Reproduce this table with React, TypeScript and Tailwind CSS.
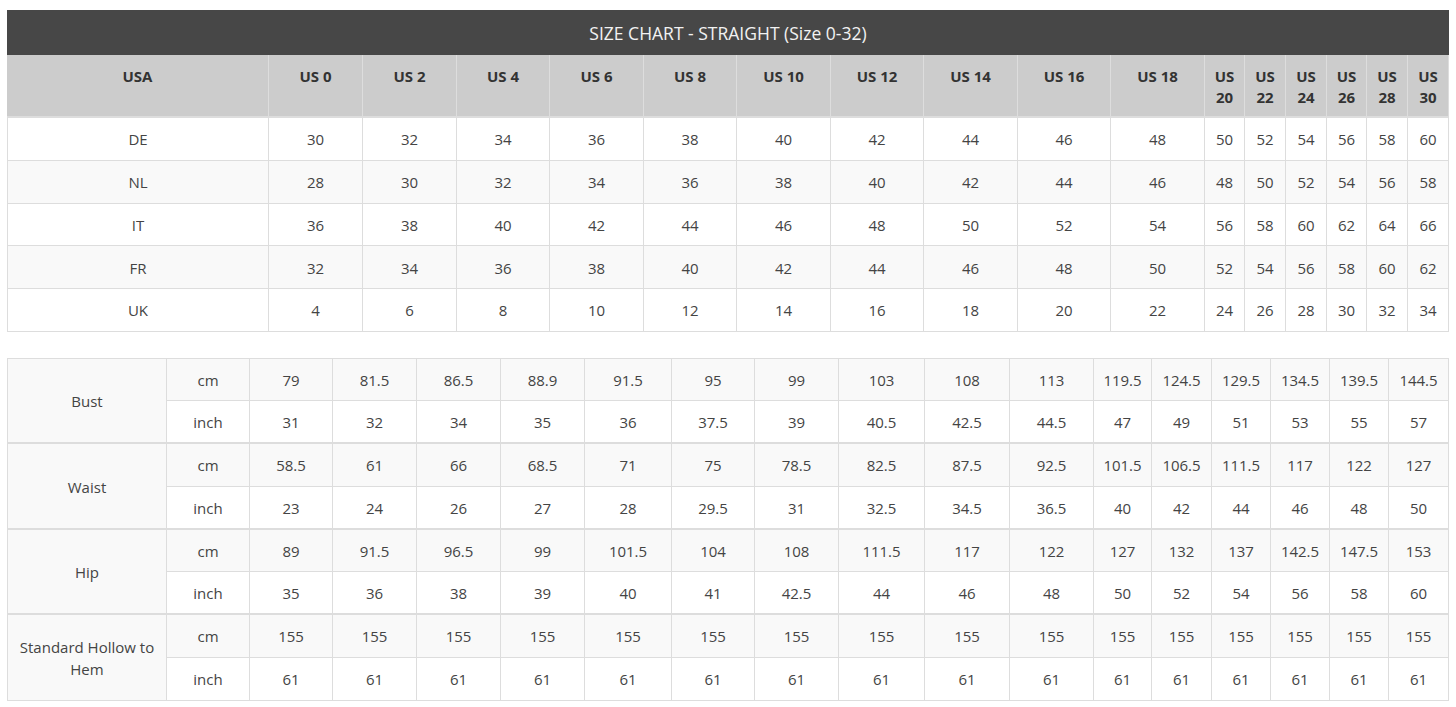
const sizes = [0, 2, 4, 6, 8, 10, 12, 14, 16, 18, 20, 22, 24, 26, 28, 30];

const range = (start: number) => sizes.map((_, i) => String(start + i * 2));

const countries = [
  { name: "DE", values: range(30) },
  { name: "NL", values: range(28) },
  { name: "IT", values: range(36) },
  { name: "FR", values: range(32) },
  { name: "UK", values: range(4) },
];

type Group = { label: string; cm: string[]; inch: string[] };

const groups: Group[] = [
  {
    label: "Bust",
    cm: ["79", "81.5", "86.5", "88.9", "91.5", "95", "99", "103", "108", "113", "119.5", "124.5", "129.5", "134.5", "139.5", "144.5"],
    inch: ["31", "32", "34", "35", "36", "37.5", "39", "40.5", "42.5", "44.5", "47", "49", "51", "53", "55", "57"],
  },
  {
    label: "Waist",
    cm: ["58.5", "61", "66", "68.5", "71", "75", "78.5", "82.5", "87.5", "92.5", "101.5", "106.5", "111.5", "117", "122", "127"],
    inch: ["23", "24", "26", "27", "28", "29.5", "31", "32.5", "34.5", "36.5", "40", "42", "44", "46", "48", "50"],
  },
  {
    label: "Hip",
    cm: ["89", "91.5", "96.5", "99", "101.5", "104", "108", "111.5", "117", "122", "127", "132", "137", "142.5", "147.5", "153"],
    inch: ["35", "36", "38", "39", "40", "41", "42.5", "44", "46", "48", "50", "52", "54", "56", "58", "60"],
  },
  {
    label: "Standard Hollow to Hem",
    cm: sizes.map(() => "155"),
    inch: sizes.map(() => "61"),
  },
];

const cell = "flex items-center justify-center text-center border-r border-[#ddd]";

export default function App() {
  return (
    <div className="min-h-screen bg-white px-[7px] pt-[10px] font-['Open_Sans',sans-serif] text-[15px] text-[#444]">
      {/* conversion table */}
      <div className="grid grid-cols-[262px_94px_94px_93px_94px_93px_94px_93px_94px_93px_94px_40px_41px_41px_40px_41px_41px]">
        <div className="col-span-17 flex h-[45px] items-center justify-center bg-[#474747] pt-px text-[17.5px] text-[#f2f2f2]">
          SIZE CHART - STRAIGHT (Size 0-32)
        </div>

        <div className="flex h-[63px] justify-center border-b-2 border-r border-[#ddd] bg-[#ccc] pt-[11px] font-bold leading-[21px] text-[#333]">
          USA
        </div>
        {sizes.map((s) => (
          <div
            key={s}
            className="flex h-[63px] justify-center border-b-2 border-r border-[#ddd] bg-[#ccc] px-[6px] pt-[11px] text-center font-bold leading-[21px] text-[#333]"
          >
            US {s}
          </div>
        ))}

        {countries.map((c, r) => {
          const bg = r % 2 === 1 ? "bg-[#f9f9f9]" : "bg-white";
          return [
            <div key={c.name} className={`${cell} ${bg} h-[42.8px] border-b border-l pt-px`}>
              {c.name}
            </div>,
            ...c.values.map((v, i) => (
              <div key={c.name + i} className={`${cell} ${bg} h-[42.8px] border-b pt-px`}>
                {v}
              </div>
            )),
          ];
        })}
      </div>

      {/* measurement table */}
      <div className="mt-[26px] grid grid-cols-[160px_83px_83px_84px_84px_84px_87px_83px_84px_86px_85px_84px_58px_60px_59px_59px_59px_60px] border-t border-[#ddd]">
        {groups.map((g, gi) => {
          const last = gi === groups.length - 1;
          const groupBorder = last ? "border-b" : "border-b-2";
          return [
            <div
              key={g.label}
              className={`${cell} row-span-2 border-l bg-[#f9f9f9] px-[10px] pt-px leading-[22px] ${groupBorder}`}
            >
              {g.label}
            </div>,
            <div key={g.label + "cm"} className={`${cell} h-[42.5px] border-b bg-[#f9f9f9] pt-px`}>
              cm
            </div>,
            ...g.cm.map((v, i) => (
              <div key={g.label + "c" + i} className={`${cell} h-[42.5px] border-b bg-[#f9f9f9] pt-px`}>
                {v}
              </div>
            )),
            <div key={g.label + "in"} className={`${cell} h-[43px] bg-white pt-px ${groupBorder}`}>
              inch
            </div>,
            ...g.inch.map((v, i) => (
              <div key={g.label + "i" + i} className={`${cell} h-[43px] bg-white pt-px ${groupBorder}`}>
                {v}
              </div>
            )),
          ];
        })}
      </div>
    </div>
  );
}
